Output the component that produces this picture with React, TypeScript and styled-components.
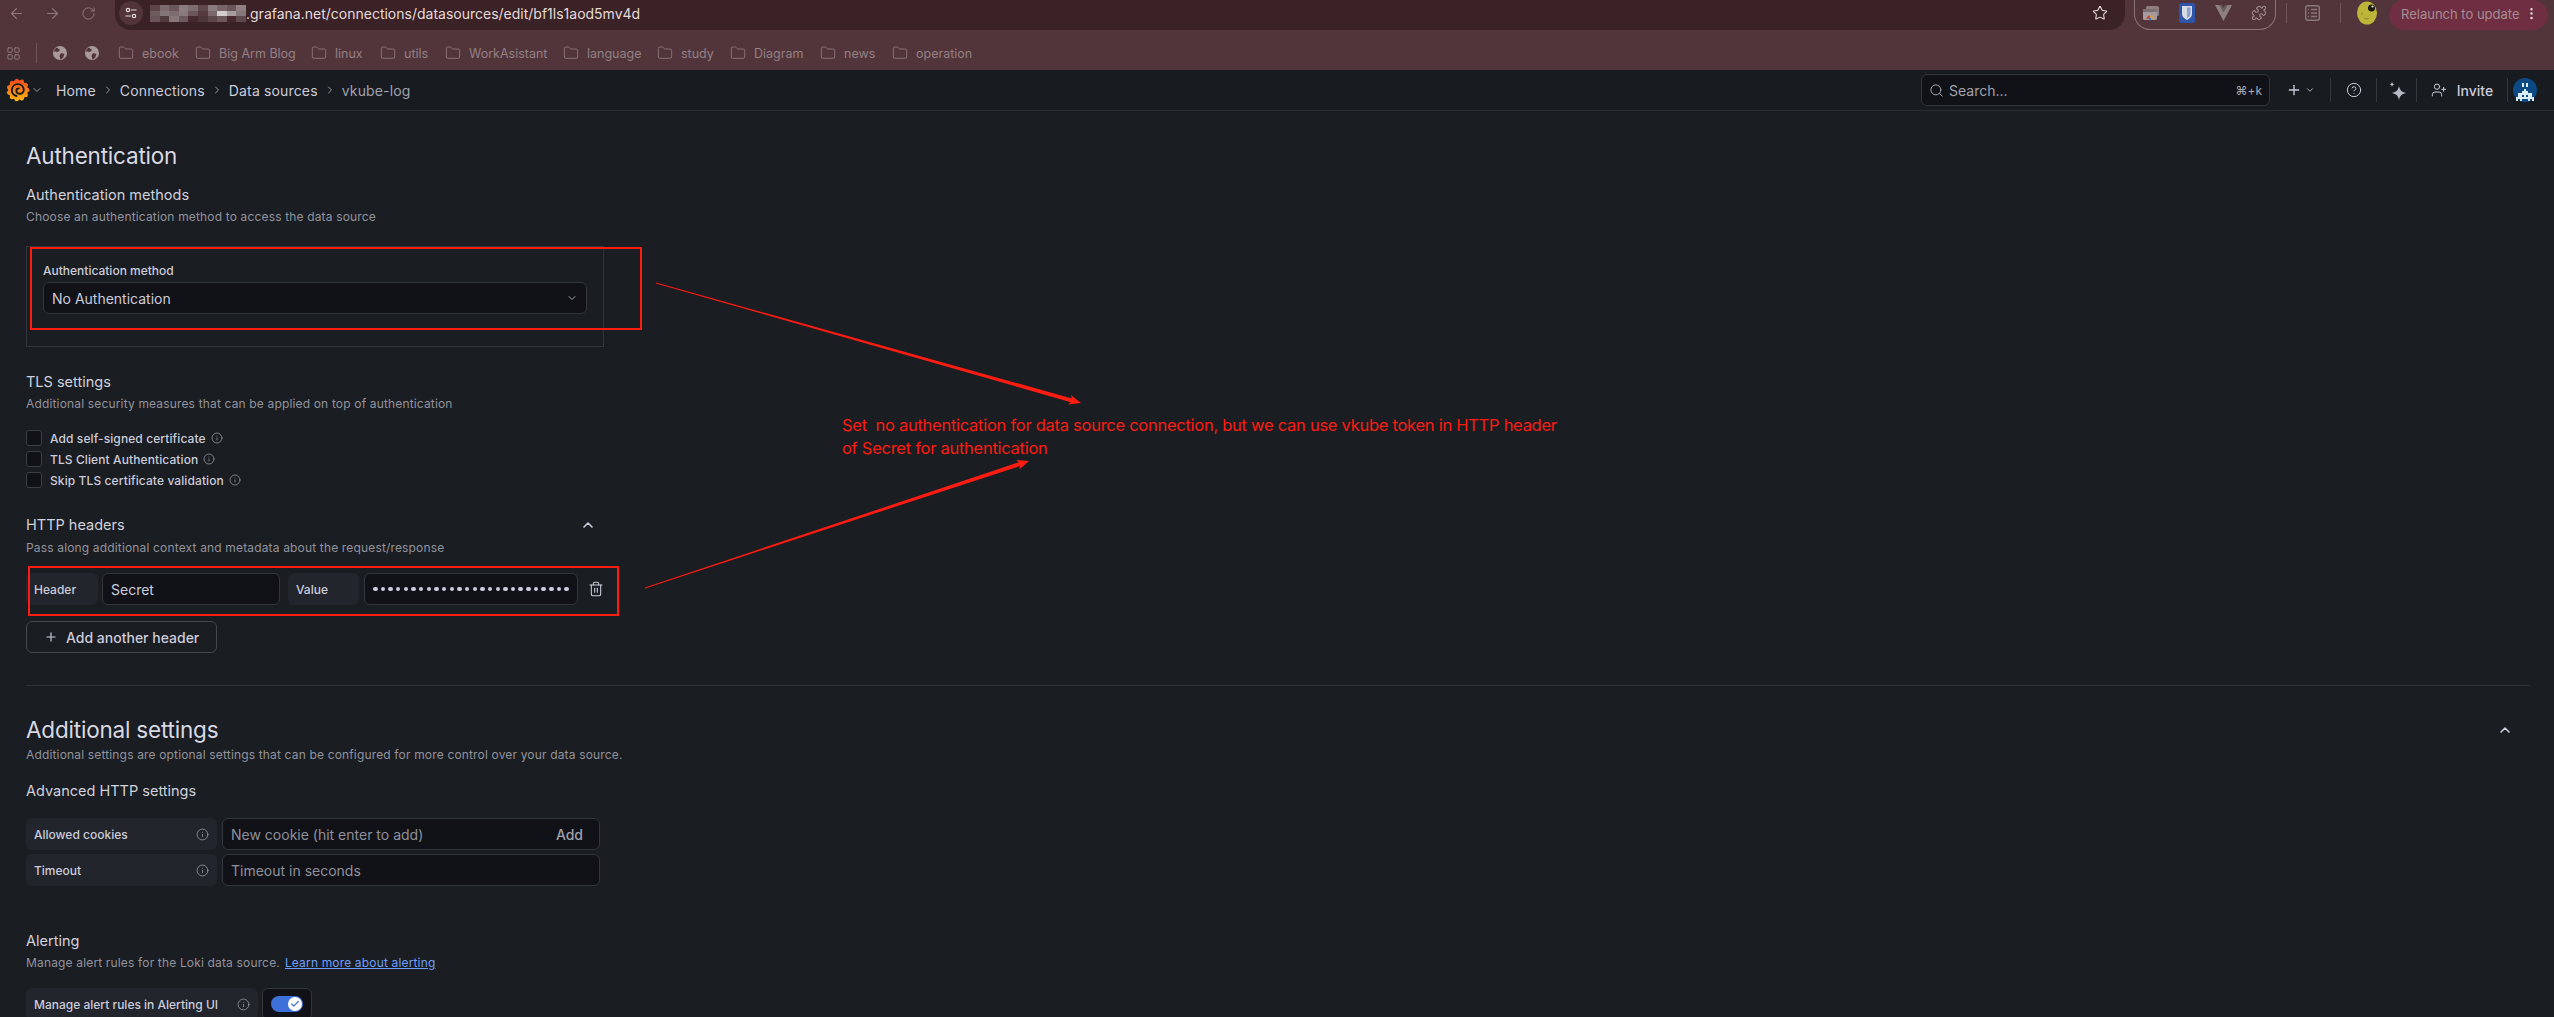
import React from 'react'
import styled, { createGlobalStyle } from 'styled-components'
import {
  ArrowLeft,
  ArrowRight,
  Check,
  ChevronDown,
  ChevronRight,
  ChevronUp,
  CircleHelp,
  EllipsisVertical,
  Folder,
  Info,
  LayoutGrid,
  Plus,
  Puzzle,
  RotateCw,
  Search,
  Star,
  Trash2,
  UserPlus,
} from 'lucide-react'

const GlobalStyle = createGlobalStyle`
  html, body {
    margin: 0;
    height: 1017px;
    overflow: hidden;
    background: #181b1f;
  }
  body {
    font-family: Inter, "Noto Sans", sans-serif;
    color: #ccccdc;
  }
  * {
    box-sizing: border-box;
  }
`

const Page = styled.div`
  position: relative;
  width: 2554px;
  height: 1017px;
  overflow: hidden;
  background: #1a1d21;
`

/* browser chrome */
const Chrome = styled.div`
  height: 70px;
  background: #52353b;
  display: flex;
  flex-direction: column;
`
const UrlRow = styled.div`
  height: 26px;
  display: flex;
  align-items: center;
`
const NavIcon = styled.div`
  width: 36px;
  padding-right: 4px;
  display: flex;
  justify-content: center;
  color: #8f7a7e;
`
const Omnibox = styled.div`
  margin-left: 7px;
  width: 2010px;
  height: 30px;
  align-self: flex-start;
  border-radius: 0 0 16px 16px;
  background: #3a2226;
  display: flex;
  align-items: center;
  padding: 0 17px 4px 4px;
  color: #e6dada;
  font-size: 14px;
`
const TuneBadge = styled.div`
  width: 24px;
  height: 24px;
  border-radius: 50%;
  background: #52353b;
  display: flex;
  align-items: center;
  justify-content: center;
  margin-right: 7px;
`
const Address = styled.span`
  flex: 1;
`
const StarIcon = styled(Star)`
  color: #e6dada;
`
const ExtensionPill = styled.div`
  margin-left: 9px;
  width: 142px;
  height: 30px;
  align-self: flex-start;
  border: 1px solid #8a7377;
  border-top: none;
  border-radius: 0 0 16px 16px;
  display: flex;
  align-items: center;
  justify-content: space-between;
  padding: 0 8px 4px 7px;
`
const ChromeSep = styled.div<{ $l: number; $r: number }>`
  width: 1px;
  height: 20px;
  background: #6e565a;
  margin: 0 ${(p) => p.$r}px 0 ${(p) => p.$l}px;
`
const RelaunchPill = styled.div`
  margin-left: 12px;
  width: 159px;
  height: 30px;
  align-self: flex-start;
  border-radius: 15px;
  background: #6f2e41;
  color: #a58d93;
  font-size: 13px;
  display: flex;
  align-items: center;
  padding: 0 0 3px 12px;
  white-space: nowrap;
  svg {
    margin-left: 4px;
    color: #e6dada;
  }
`
const BookmarkRow = styled.div`
  flex: 1;
  display: flex;
  align-items: center;
  padding: 10px 0 0 6px;
  color: #907d81;
  font-size: 12.5px;
`
const GridIcon = styled(LayoutGrid)`
  color: #938084;
`
const Bookmark = styled.div`
  display: flex;
  align-items: center;
  gap: 8px;
  width: ${(p: { $w: number }) => p.$w}px;
  white-space: nowrap;
  color: #938084;
  svg {
    color: #8d7a7e;
    flex-shrink: 0;
  }
`
const GlobeWrap = styled.div`
  width: 16px;
  height: 16px;
  margin-right: ${(p: { $r: number }) => p.$r}px;
`

/* grafana top bar */
const TopBar = styled.header`
  height: 41px;
  background: #181b1f;
  border-bottom: 1px solid #2a2d32;
  display: flex;
  align-items: center;
  padding: 0 13px 0 6px;
  font-size: 14px;
`
const LogoChevron = styled(ChevronDown)`
  color: #9a9aa8;
  margin: 0 0 0 1px;
`
const Crumbs = styled.nav`
  display: flex;
  align-items: center;
  margin-left: 13px;
  flex: 1;
`
const Crumb = styled.span`
  color: ${(p: { $current?: boolean }) => (p.$current ? '#a0a1ad' : '#ccccdc')};
  font-weight: 400;
  letter-spacing: 0.15px;
`
const CrumbSep = styled(ChevronRight)`
  color: #9a9aa8;
  margin: 0 6px;
`
const SearchBox = styled.div`
  width: 349px;
  height: 32px;
  background: #111217;
  border: 1px solid #33363b;
  border-radius: 6px;
  display: flex;
  align-items: center;
  padding: 0 7px;
  gap: 5px;
  color: #a0a1ad;
`
const SearchHint = styled.span`
  flex: 1;
`
const ShortCut = styled.span`
  font-size: 12px;
  color: #a8a9b5;
`
const BarButton = styled.div<{ $w: number; $gap?: number }>`
  display: flex;
  align-items: center;
  justify-content: center;
  width: ${(p) => p.$w}px;
  height: 24px;
  color: #ccccdc;
  gap: ${(p) => p.$gap ?? 3}px;
  font-weight: 500;
`
const BarSep = styled.div`
  width: 1px;
  height: 24px;
  background: #34373c;
`

/* form */
const Main = styled.main`
  padding: 31px 24px 0 26px;
  display: flex;
  flex-direction: column;
`
const PageTitle = styled.h2`
  margin: 0;
  font-size: 22.5px;
  line-height: 28px;
  font-weight: 400;
  color: #d8d9e3;
  letter-spacing: -0.2px;
`
const Heading = styled.h3`
  margin: ${(p: { $mt: number }) => p.$mt}px 0 0;
  font-size: 14.5px;
  line-height: 22px;
  font-weight: 400;
  color: #d0d1dc;
`
const Hint = styled.p`
  margin: ${(p: { $mt: number }) => p.$mt}px 0 0;
  font-size: 12px;
  line-height: 16px;
  letter-spacing: 0.16px;
  color: #92939e;
`
const MethodBox = styled.div`
  margin-top: 21px;
  width: 578px;
  height: 101px;
  border: 1px solid #32353a;
  padding: 16px;
`
const FieldLabel = styled.label`
  display: block;
  font-size: 12px;
  line-height: 16px;
  font-weight: 500;
  color: #ccccdc;
`
const SelectBox = styled.div`
  margin-top: 3px;
  width: 544px;
  height: 32px;
  background: #111217;
  border: 1px solid #33363b;
  border-radius: 6px;
  display: flex;
  align-items: center;
  justify-content: space-between;
  padding: 0 8px 0 8px;
  font-size: 14px;
  color: #ccccdc;
  svg {
    color: #a0a1ad;
  }
`
const CheckList = styled.div`
  margin-top: 18px;
  display: flex;
  flex-direction: column;
  gap: 5px;
`
const CheckRow = styled.div`
  display: flex;
  align-items: center;
  height: 16px;
  font-size: 12px;
  letter-spacing: 0.1px;
  font-weight: 500;
  color: #ccccdc;
  svg {
    margin-left: 5px;
    color: #9a9ba6;
  }
`
const CheckBox = styled.span`
  width: 16px;
  height: 16px;
  border: 1px solid #3c3f44;
  border-radius: 3px;
  background: #111217;
  margin-right: 8px;
`
const HeadingRow = styled.div`
  margin-top: ${(p: { $mt: number }) => p.$mt}px;
  width: ${(p: { $w: number }) => p.$w}px;
  display: flex;
  align-items: center;
  justify-content: space-between;
  svg {
    color: #ccccdc;
  }
`
const HeadingRowTitle = styled(Heading)`
  margin: 0;
`
const HeadersRow = styled.div`
  margin-top: 17px;
  display: flex;
  align-items: center;
  height: 32px;
`
const InlineLabel = styled.div`
  width: ${(p: { $w: number }) => p.$w}px;
  height: 32px;
  flex-shrink: 0;
  margin-left: ${(p: { $ml?: number }) => p.$ml ?? 0}px;
  background: #22252b;
  border-radius: 6px;
  display: flex;
  align-items: center;
  justify-content: space-between;
  padding: 0 8px;
  font-size: 12px;
  font-weight: 500;
  color: #ccccdc;
  svg {
    color: #9a9ba6;
  }
`
const TextField = styled.div`
  width: ${(p: { $w: number }) => p.$w}px;
  height: 32px;
  margin-left: ${(p: { $ml: number }) => p.$ml}px;
  background: #111217;
  border: 1px solid #33363b;
  border-radius: 6px;
  display: flex;
  align-items: center;
  justify-content: space-between;
  padding: 0 8px;
  font-size: 14px;
  color: ${(p: { $muted?: boolean }) => (p.$muted ? '#8f909b' : '#ccccdc')};
`
const Dots = styled.span`
  display: flex;
  justify-content: space-between;
  width: 196px;
`
const Dot = styled.i`
  width: 4.5px;
  height: 4.5px;
  border-radius: 50%;
  background: #ccccdc;
`
const AddInline = styled.span`
  font-weight: 500;
  color: #a0a1ad;
  margin-right: 8px;
`
const TrashIcon = styled(Trash2)`
  margin-left: 10px;
  color: #ccccdc;
`
const OutlineButton = styled.div`
  margin-top: 16px;
  width: 191px;
  height: 32px;
  border: 1px solid #44474c;
  border-radius: 6px;
  display: flex;
  align-items: center;
  padding-left: 17px;
  gap: 8px;
  font-size: 14px;
  font-weight: 500;
  color: #ccccdc;
`
const Divider = styled.hr`
  margin: 32px 0 0;
  border: none;
  height: 1px;
  background: #2f3237;
`
const TitleRow = styled.div`
  margin-top: 30px;
  display: flex;
  align-items: center;
  justify-content: space-between;
  padding-right: 17px;
  svg {
    color: #ccccdc;
  }
`
const FieldRows = styled.div`
  margin-top: ${(p: { $mt: number }) => p.$mt}px;
  display: flex;
  flex-direction: column;
  gap: 4px;
`
const FieldRow = styled.div`
  display: flex;
`
const AlertLink = styled.a`
  color: #6e9fff;
  text-decoration: underline;
  margin-left: 5px;
`
const ToggleCell = styled.div`
  margin-left: 4px;
  width: 50px;
  height: 32px;
  border: 1px solid #33363b;
  border-radius: 6px;
  background: #111217;
  display: flex;
  align-items: center;
  justify-content: center;
`
const ToggleTrack = styled.div`
  width: 32px;
  height: 16px;
  border-radius: 8px;
  background: #3d71d9;
  display: flex;
  align-items: center;
  justify-content: flex-end;
  padding-right: 1px;
`
const ToggleKnob = styled.div`
  width: 14px;
  height: 14px;
  border-radius: 50%;
  background: #fff;
  display: flex;
  align-items: center;
  justify-content: center;
  color: #3d71d9;
`

/* red annotations drawn over the screenshot */
const RedFrame = styled.div<{ $l: number; $t: number; $w: number; $h: number }>`
  position: absolute;
  left: ${(p) => p.$l}px;
  top: ${(p) => p.$t}px;
  width: ${(p) => p.$w}px;
  height: ${(p) => p.$h}px;
  border: 2px solid #fb1c12;
  pointer-events: none;
`
const ArrowLayer = styled.svg`
  position: absolute;
  left: 0;
  top: 0;
  pointer-events: none;
`
const Note = styled.div`
  position: absolute;
  left: 842px;
  top: 414px;
  font-size: 16.5px;
  line-height: 22.5px;
  letter-spacing: -0.27px;
  color: #fb1c12;
  white-space: pre;
`

function arrowShape(x1: number, y1: number, x2: number, y2: number) {
  const len = Math.hypot(x2 - x1, y2 - y1)
  const ux = (x2 - x1) / len
  const uy = (y2 - y1) / len
  const nx = -uy
  const ny = ux
  const pt = (along: number, side: number) =>
    `${(x1 + ux * along + nx * side).toFixed(1)},${(y1 + uy * along + ny * side).toFixed(1)}`
  return [
    pt(0, -0.4),
    pt(len - 10, -2),
    pt(len - 12, -5),
    pt(len, 0),
    pt(len - 12, 5),
    pt(len - 10, 2),
    pt(0, 0.4),
  ].join(' ')
}

function gearPoints() {
  const pts: string[] = []
  for (let i = 0; i < 11; i++) {
    const step = (Math.PI * 2) / 11
    const a = i * step - Math.PI / 2 - 0.15
    const p = (ang: number, r: number) =>
      `${(12 + Math.cos(ang) * r).toFixed(2)},${(12 + Math.sin(ang) * r).toFixed(2)}`
    pts.push(p(a - step * 0.22, 11), p(a + step * 0.14, 11.6), p(a + step * 0.5, 9.6))
  }
  return pts.join(' ')
}

const GrafanaLogo = () => (
  <svg width="24" height="24" viewBox="0 0 24 24">
    <defs>
      <linearGradient id="gf" x1="0" y1="0" x2="0" y2="1">
        <stop offset="0" stopColor="#f0461f" />
        <stop offset="0.55" stopColor="#f7861a" />
        <stop offset="1" stopColor="#fbb80f" />
      </linearGradient>
    </defs>
    <polygon points={gearPoints()} fill="url(#gf)" />
    <path
      d="M10.500 18a6 6 0 1 1 7.300-6.500 4.300 4.300 0 0 1-4.100 4.300 3.200 3.200 0 0 1-3.400-3.200 2.200 2.200 0 0 1 2.400-2.200"
      fill="none"
      stroke="#16181c"
      strokeWidth="1.900"
      strokeLinecap="round"
    />
  </svg>
)

const TuneIcon = () => (
  <svg width="14" height="14" viewBox="0 0 14 14" fill="none" stroke="#e6dada" strokeWidth="1.2">
    <circle cx="4" cy="4" r="1.7" />
    <path d="M7 4h5.5M1.5 10H7" />
    <circle cx="10" cy="10" r="1.7" />
  </svg>
)

const BLUR = [
  '#5c4449', '#7b6a6e', '#6c585c', '#8c7d80', '#7d6c70', '#5f484c', '#8a7b7e', '#776569', '#6a565a', '#8d7f82',
  '#6d5a5e', '#85767a', '#7c6b6f', '#897a7d', '#6b575b', '#54393e', '#7a686c', '#d2cccd', '#a89c9f', '#867679',
  '#6a565a', '#503a3e', '#87777a', '#6d5a5e', '#46292e', '#4e373b', '#5f484c', '#6c585c', '#46292e', '#5f494d',
]

const BlurredHost = () => (
  <svg width="96" height="17" viewBox="0 0 96 17" shapeRendering="crispEdges">
    {BLUR.map((c, i) => (
      <rect key={i} x={(i % 10) * 9.6} y={Math.floor(i / 10) * 5.67} width="9.6" height="5.67" fill={c} />
    ))}
  </svg>
)

const GlobeIcon = () => (
  <svg width="16" height="16" viewBox="0 0 16 16">
    <circle cx="8" cy="8" r="7" fill="#a89a9c" />
    <path d="M5 2.500 8 5 6 7 3 6.500 1.800 6.500C2.300 4.700 3.400 3.300 5 2.500ZM9 8l3.500 1-1.500 4-2.500 1.500L7.500 11Z" fill="#52353b" />
  </svg>
)

const TabStackIcon = () => (
  <svg width="18" height="16" viewBox="0 0 18 16">
    <rect x="4" y="1" width="13" height="10" rx="1.500" fill="#8e7d80" />
    <rect x="1" y="4" width="14" height="11" rx="1.500" fill="#a79a9c" />
    <rect x="1" y="4" width="14" height="3" fill="#7e6d70" />
    <path d="M4.500 14a3.500 3.500 0 0 1 7 0Z" fill="#d8a23a" />
    <path d="M4.500 14a3.500 3.500 0 0 1 3.500-3.500V14Z" fill="#c7483d" />
    <circle cx="8" cy="14" r="1.400" fill="#4a7bd0" />
  </svg>
)

const BitwardenIcon = () => (
  <svg width="16" height="20" viewBox="0 0 16 20">
    <rect width="16" height="20" rx="2.500" fill="#2e55a8" />
    <path d="M3 3h10v8c0 3-2.500 4.500-5 6-2.500-1.500-5-3-5-6Z" fill="#d6dbe6" />
    <path d="M8 4.500h3.500V11c0 2-1.700 3-3.500 4Z" fill="#8ea2cb" />
  </svg>
)

const VueIcon = () => (
  <svg width="17" height="16" viewBox="0 0 17 16">
    <path d="M0 0h4.500l4 7 4-7H17L8.500 16Z" fill="#8c8082" />
    <path d="M4.500 0h2.300l1.700 3 1.700-3h2.300L8.500 7Z" fill="#6d5c5f" />
  </svg>
)

const SidePanelIcon = () => (
  <svg width="15" height="16" viewBox="0 0 15 16" fill="none" stroke="#8b787b" strokeWidth="1.400">
    <rect x="0.700" y="0.700" width="13.600" height="14.600" rx="2" />
    <path d="M6 4.500h6M6 8h6M6 11.500h6M3 4.500h1M3 8h1M3 11.500h1" />
  </svg>
)

const ProfileIcon = () => (
  <svg width="20" height="24" viewBox="0 0 20 24">
    <ellipse cx="10" cy="12" rx="10" ry="11.500" fill="#bdb53a" />
    <circle cx="14.500" cy="7" r="3.500" fill="#1c1a10" />
    <circle cx="15.500" cy="5.500" r="1.100" fill="#eee" />
    <path d="M4 13.500 6 12M7 17c2 1.300 3.500 1 5 .3" stroke="#8b8420" strokeWidth="1" fill="none" />
  </svg>
)

const SparkleIcon = () => (
  <svg width="20" height="24" viewBox="0 0 20 24" fill="#b9bac6">
    <path d="M12 8c1 4.300 2.400 5.800 7 7-4.600 1.200-6 2.700-7 7-1-4.300-2.400-5.800-7-7 4.600-1.200 6-2.700 7-7Z" />
    <path d="M5 3.500c.3 1.800.9 2.400 2.700 2.800C5.900 6.700 5.300 7.300 5 9.100 4.700 7.300 4.100 6.700 2.300 6.300 4.100 5.900 4.700 5.300 5 3.500Z" />
  </svg>
)

const INVADER = [
  '.........',
  '...x.x...',
  '...x.x...',
  '.........',
  '....x....',
  '...xxx...',
  '.xxxxxxx.',
  '.xx.x.xx.',
  'xxxxxxxxx',
  'x.x...x.x',
]

const UserAvatar = () => (
  <svg width="24" height="24" viewBox="0 0 24 24" shapeRendering="crispEdges">
    <circle cx="12" cy="12" r="12" fill="#0d4a85" shapeRendering="auto" />
    {INVADER.map((row, y) =>
      row
        .split('')
        .map((c, x) => (c === 'x' ? <rect key={`${x}-${y}`} x={3 + x * 2} y={3 + y * 2} width="2" height="2" fill="#d9ecf7" /> : null)),
    )}
  </svg>
)

const BOOKMARKS: { name: string; w: number }[] = [
  { name: 'ebook', w: 77 },
  { name: 'Big Arm Blog', w: 116 },
  { name: 'linux', w: 69 },
  { name: 'utils', w: 65 },
  { name: 'WorkAsistant', w: 118 },
  { name: 'language', w: 94 },
  { name: 'study', w: 73 },
  { name: 'Diagram', w: 90 },
  { name: 'news', w: 72 },
  { name: 'operation', w: 80 },
]

const TLS_OPTIONS = ['Add self-signed certificate', 'TLS Client Authentication', 'Skip TLS certificate validation']

export default function App() {
  return (
    <Page>
      <GlobalStyle />
      <Chrome>
        <UrlRow>
          <NavIcon>
            <ArrowLeft size={17} strokeWidth={1.6} />
          </NavIcon>
          <NavIcon>
            <ArrowRight size={17} strokeWidth={1.6} />
          </NavIcon>
          <NavIcon>
            <RotateCw size={15} strokeWidth={1.6} />
          </NavIcon>
          <Omnibox>
            <TuneBadge>
              <TuneIcon />
            </TuneBadge>
            <BlurredHost />
            <Address>.grafana.net/connections/datasources/edit/bf1ls1aod5mv4d</Address>
            <StarIcon size={16} strokeWidth={1.6} />
          </Omnibox>
          <ExtensionPill>
            <TabStackIcon />
            <BitwardenIcon />
            <VueIcon />
            <Puzzle size={16} strokeWidth={1.6} color="#a08d90" />
          </ExtensionPill>
          <ChromeSep $l={10} $r={18} />
          <SidePanelIcon />
          <ChromeSep $l={20} $r={16} />
          <ProfileIcon />
          <RelaunchPill>
            Relaunch to update
            <EllipsisVertical size={15} />
          </RelaunchPill>
        </UrlRow>
        <BookmarkRow>
          <GridIcon size={15} strokeWidth={1.4} />
          <ChromeSep $l={15} $r={15} />
          <GlobeWrap $r={16}>
            <GlobeIcon />
          </GlobeWrap>
          <GlobeWrap $r={18}>
            <GlobeIcon />
          </GlobeWrap>
          {BOOKMARKS.map((b) => (
            <Bookmark key={b.name} $w={b.w}>
              <Folder size={16} strokeWidth={1.3} />
              {b.name}
            </Bookmark>
          ))}
        </BookmarkRow>
      </Chrome>

      <TopBar>
        <GrafanaLogo />
        <LogoChevron size={12} />
        <Crumbs>
          <Crumb>Home</Crumb>
          <CrumbSep size={12} />
          <Crumb>Connections</Crumb>
          <CrumbSep size={12} />
          <Crumb>Data sources</Crumb>
          <CrumbSep size={12} />
          <Crumb $current>vkube-log</Crumb>
        </Crumbs>
        <SearchBox>
          <Search size={15} strokeWidth={1.6} />
          <SearchHint>Search...</SearchHint>
          <ShortCut>⌘+k</ShortCut>
        </SearchBox>
        <BarButton $w={60}>
          <Plus size={16} />
          <ChevronDown size={10} />
        </BarButton>
        <BarSep />
        <BarButton $w={45}>
          <CircleHelp size={16} strokeWidth={1.5} />
        </BarButton>
        <BarSep />
        <BarButton $w={39}>
          <SparkleIcon />
        </BarButton>
        <BarSep />
        <BarButton $w={90} $gap={10}>
          <UserPlus size={16} strokeWidth={1.5} />
          <span>Invite</span>
        </BarButton>
        <BarSep />
        <BarButton $w={33}>
          <UserAvatar />
        </BarButton>
      </TopBar>

      <Main>
        <PageTitle>Authentication</PageTitle>
        <Heading $mt={14}>Authentication methods</Heading>
        <Hint $mt={3}>Choose an authentication method to access the data source</Hint>
        <MethodBox>
          <FieldLabel>Authentication method</FieldLabel>
          <SelectBox>
            No Authentication
            <ChevronDown size={12} />
          </SelectBox>
        </MethodBox>

        <Heading $mt={24}>TLS settings</Heading>
        <Hint $mt={3}>Additional security measures that can be applied on top of authentication</Hint>
        <CheckList>
          {TLS_OPTIONS.map((label) => (
            <CheckRow key={label}>
              <CheckBox />
              {label}
              <Info size={12} strokeWidth={1.5} />
            </CheckRow>
          ))}
        </CheckList>

        <HeadingRow $mt={26} $w={570}>
          <HeadingRowTitle $mt={0}>HTTP headers</HeadingRowTitle>
          <ChevronUp size={16} strokeWidth={2.4} />
        </HeadingRow>
        <Hint $mt={4}>Pass along additional context and metadata about the request/response</Hint>
        <HeadersRow>
          <InlineLabel $w={72}>Header</InlineLabel>
          <TextField $w={178} $ml={4}>
            Secret
          </TextField>
          <InlineLabel $w={71} $ml={8}>
            Value
          </InlineLabel>
          <TextField $w={214} $ml={5}>
            <Dots>
              {Array.from({ length: 26 }, (_, i) => (
                <Dot key={i} />
              ))}
            </Dots>
          </TextField>
          <TrashIcon size={16} strokeWidth={1.6} />
        </HeadersRow>
        <OutlineButton>
          <Plus size={14} />
          Add another header
        </OutlineButton>

        <Divider />

        <TitleRow>
          <PageTitle>Additional settings</PageTitle>
          <ChevronUp size={16} strokeWidth={2.4} />
        </TitleRow>
        <Hint $mt={3}>Additional settings are optional settings that can be configured for more control over your data source.</Hint>

        <Heading $mt={17}>Advanced HTTP settings</Heading>
        <FieldRows $mt={16}>
          <FieldRow>
            <InlineLabel $w={191}>
              Allowed cookies
              <Info size={13} strokeWidth={1.5} />
            </InlineLabel>
            <TextField $w={378} $ml={5} $muted>
              New cookie (hit enter to add)
              <AddInline>Add</AddInline>
            </TextField>
          </FieldRow>
          <FieldRow>
            <InlineLabel $w={191}>
              Timeout
              <Info size={13} strokeWidth={1.5} />
            </InlineLabel>
            <TextField $w={378} $ml={5} $muted>
              Timeout in seconds
            </TextField>
          </FieldRow>
        </FieldRows>

        <Heading $mt={44}>Alerting</Heading>
        <Hint $mt={3}>
          Manage alert rules for the Loki data source.
          <AlertLink>Learn more about alerting</AlertLink>
        </Hint>
        <FieldRows $mt={17}>
          <FieldRow>
            <InlineLabel $w={232}>
              Manage alert rules in Alerting UI
              <Info size={13} strokeWidth={1.5} />
            </InlineLabel>
            <ToggleCell>
              <ToggleTrack>
                <ToggleKnob>
                  <Check size={10} strokeWidth={3} />
                </ToggleKnob>
              </ToggleTrack>
            </ToggleCell>
          </FieldRow>
        </FieldRows>
      </Main>

      <RedFrame $l={30} $t={247} $w={612} $h={83} />
      <RedFrame $l={28} $t={566} $w={591} $h={50} />
      <ArrowLayer width="2554" height="1017">
        <polygon points={arrowShape(656, 283, 1081, 403)} fill="#fb1c12" />
        <polygon points={arrowShape(645, 588, 1029, 461)} fill="#fb1c12" />
      </ArrowLayer>
      <Note>{'Set  no authentication for data source connection, but we can use vkube token in HTTP header\nof Secret for authentication'}</Note>
    </Page>
  )
}
